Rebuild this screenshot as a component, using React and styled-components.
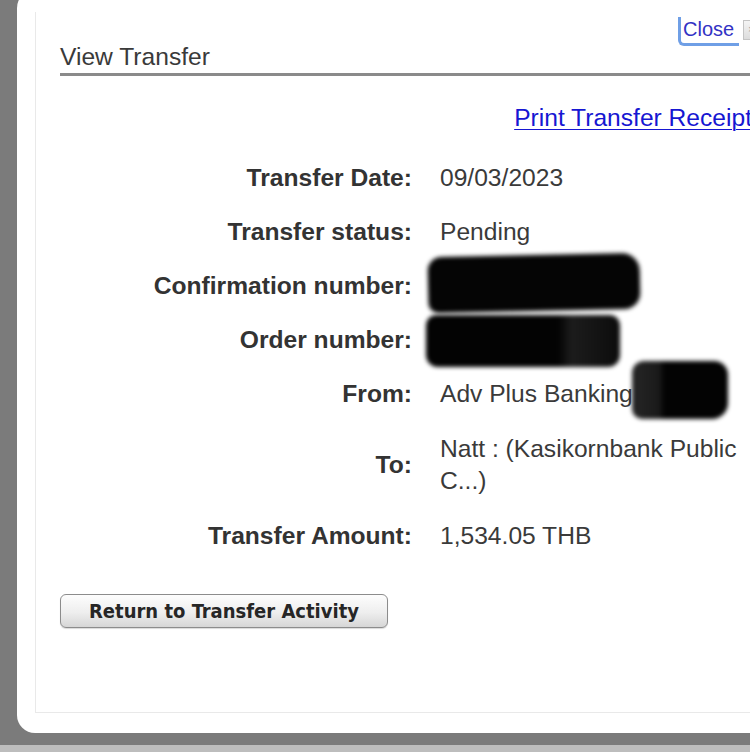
import React from 'react';
import styled, { createGlobalStyle } from 'styled-components';

const GlobalStyle = createGlobalStyle`
    html, body {
        margin: 0;
        padding: 0;
        background: #7b7b7b;
        overflow: hidden;
    }
    body {
        font-family: "Liberation Sans", Arial, sans-serif;
    }
`;

const Page = styled.div`
    height: 752px;
    display: flex;
    flex-direction: column;
    overflow: hidden;
    background: #7b7b7b;
`;

const Dialog = styled.div`
    position: relative;
    flex-shrink: 0;
    width: 800px;
    height: 743px;
    margin: -10px 0 12px 17px;
    padding: 22px 0 20px 18px;
    box-sizing: border-box;
    background: #fff;
    border-radius: 18px;
    display: flex;
    flex-direction: column;
`;

const BottomStrip = styled.div`
    height: 7px;
    background: #bdbdbd;
`;

const Panel = styled.div`
    flex: 1;
    border-left: 1px solid #e9e9e9;
    border-bottom: 1px solid #e9e9e9;
    padding: 0 65px 0 24px;
    display: flex;
    flex-direction: column;
`;

const Header = styled.div`
    margin-top: 31px;
    padding-bottom: 2px;
    border-bottom: 3px solid #8a8a8a;
`;

const Title = styled.h2`
    margin: 0;
    font-size: 24.6px;
    line-height: 28px;
    font-weight: 400;
    color: #3a3a3a;
`;

const CloseBar = styled.div`
    position: absolute;
    top: 27px;
    left: 661px;
    display: flex;
    align-items: center;
    gap: 4px;
`;

const CloseLink = styled.a`
    display: block;
    height: 26px;
    padding: 0 5px 0 2px;
    border-left: 3px solid #6f9fe6;
    border-bottom: 3px solid #6f9fe6;
    border-radius: 0 0 0 6px;
    font-size: 20px;
    line-height: 24px;
    color: #3232c4;
    text-decoration: none;
`;

const CloseIcon = styled.span`
    display: block;
    width: 16px;
    height: 20px;
    margin-bottom: 4px;
    box-sizing: border-box;
    border: 1px solid #c4c4c4;
    background: linear-gradient(#f4f4f4, #dcdcdc);
    font-size: 10px;
    line-height: 18px;
    text-align: center;
    color: #999;
`;

const LinkRow = styled.div`
    margin-top: 28px;
    display: flex;
    justify-content: flex-end;
`;

const PrintLink = styled.a`
    font-size: 24.6px;
    line-height: 28px;
    color: #1616d2;
    text-decoration: underline;
    text-underline-offset: 3px;
    text-decoration-thickness: 1px;
    white-space: nowrap;
`;

const Details = styled.dl`
    margin: 19px 0 0;
    display: grid;
    grid-template-columns: 352px 310px;
    column-gap: 28px;
    align-items: center;
`;

const Label = styled.dt`
    padding: 11px 0;
    text-align: right;
    font-size: 24.6px;
    line-height: 32px;
    font-weight: 700;
    color: #333;
    white-space: nowrap;
`;

const Value = styled.dd`
    position: relative;
    margin: 0;
    padding: ${props => (props.wrap ? '12px 0' : '11px 0')};
    font-size: 24.6px;
    line-height: 32px;
    color: #3a3a3a;
    white-space: ${props => (props.wrap ? 'normal' : 'nowrap')};
`;

const Redaction = styled.span`
    position: absolute;
    left: ${props => props.left}px;
    top: ${props => props.top}px;
    width: ${props => props.w}px;
    height: ${props => props.h}px;
    border-radius: ${props => props.radius || '12px 16px 14px 12px'};
    background: ${props => props.fill || '#050505'};
    filter: blur(2px);
    transform: rotate(${props => props.tilt || 0}deg);
`;

const Actions = styled.div`
    margin-top: 31px;
`;

const ReturnButton = styled.button`
    width: 328px;
    height: 34px;
    padding: 0;
    border: 1px solid #8c8c8c;
    border-radius: 6px;
    background: linear-gradient(#fdfdfd 0%, #eeeeee 55%, #d6d6d6 100%);
    box-shadow: 0 1px 1px rgba(0, 0, 0, 0.15);
    font-family: "DejaVu Sans Condensed", "DejaVu Sans", sans-serif;
    font-size: 20px;
    font-weight: 700;
    color: #262626;
    cursor: pointer;
`;

const rows = [
    { label: 'Transfer Date:', value: '09/03/2023' },
    { label: 'Transfer status:', value: 'Pending' },
    {
        label: 'Confirmation number:',
        value: '',
        marks: [{ left: -12, top: -4, w: 212, h: 56, tilt: -1.2, radius: '14px 18px 16px 10px' }],
    },
    {
        label: 'Order number:',
        value: '',
        marks: [{
            left: -14, top: 2, w: 194, h: 52, radius: '10px 10px 12px 12px',
            fill: 'linear-gradient(90deg, #030303 0%, #030303 68%, #1c1c1c 75%, #0c0c0c 100%)',
        }],
    },
    {
        label: 'From:',
        value: 'Adv Plus Banking -',
        marks: [{
            left: 192, top: -6, w: 96, h: 58, radius: '12px 14px 16px 10px',
            fill: 'linear-gradient(90deg, #262626 0%, #1a1a1a 28%, #030303 34%, #030303 100%)',
        }],
    },
    { label: 'To:', value: 'Natt : (Kasikornbank Public C...)', wrap: true },
    { label: 'Transfer Amount:', value: '1,534.05 THB' },
];

const App = () => (
    <>
        <GlobalStyle />
        <Page>
            <Dialog>
                <CloseBar>
                    <CloseLink href="#">Close</CloseLink>
                    <CloseIcon>×</CloseIcon>
                </CloseBar>
                <Panel>
                    <Header>
                        <Title>View Transfer</Title>
                    </Header>
                    <LinkRow>
                        <PrintLink href="#">Print Transfer Receipt</PrintLink>
                    </LinkRow>
                    <Details>
                        {rows.map(row => (
                            <React.Fragment key={row.label}>
                                <Label>{row.label}</Label>
                                <Value wrap={row.wrap}>
                                    {row.value || '\u00a0'}
                                    {(row.marks || []).map((m, i) => (
                                        <Redaction key={i} {...m} />
                                    ))}
                                </Value>
                            </React.Fragment>
                        ))}
                    </Details>
                    <Actions>
                        <ReturnButton type="button">Return to Transfer Activity</ReturnButton>
                    </Actions>
                </Panel>
            </Dialog>
            <BottomStrip />
        </Page>
    </>
);

export default App;
